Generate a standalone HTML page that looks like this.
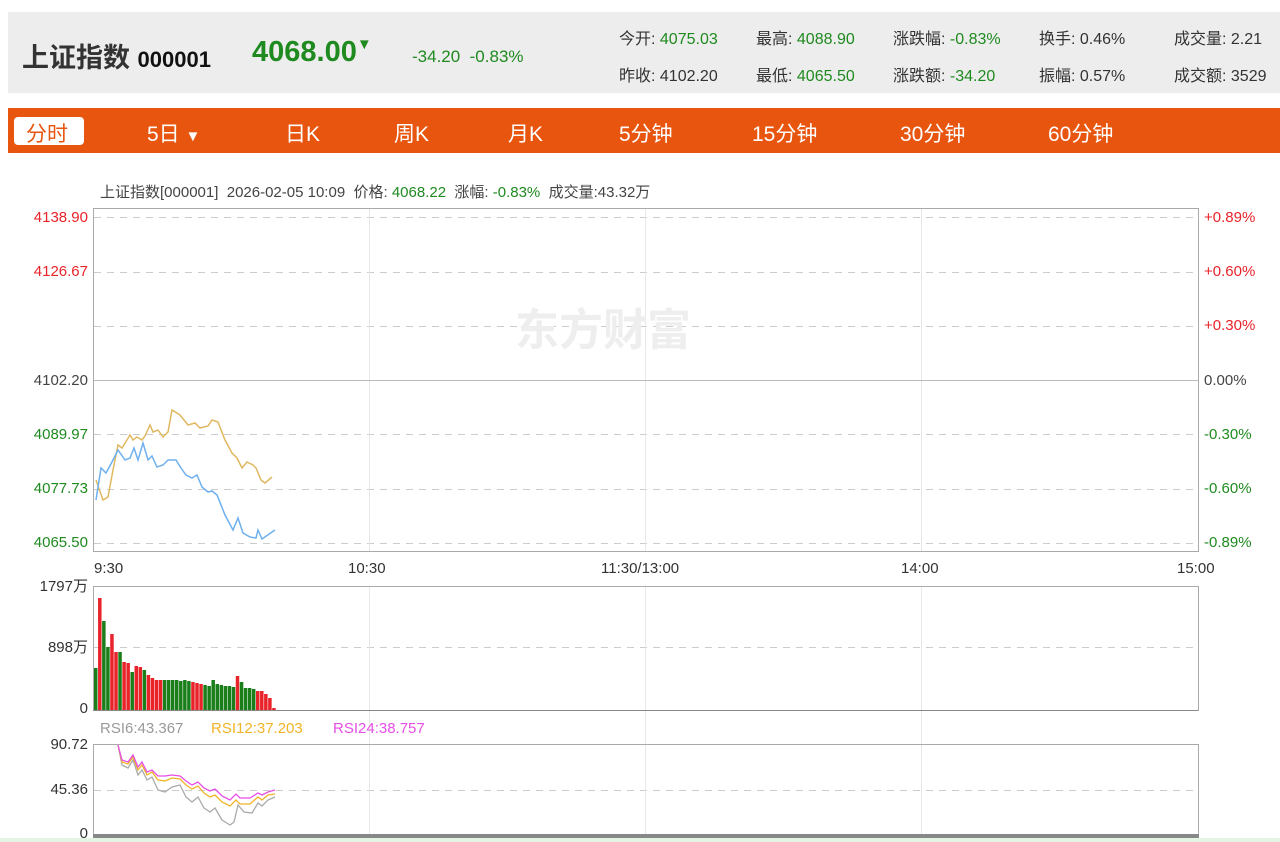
<!DOCTYPE html>
<html><head><meta charset="utf-8"><style>
body{margin:0;width:1280px;height:842px;overflow:hidden;background:#fff;font-family:"Liberation Sans","Noto Sans CJK SC",sans-serif;position:relative}
.hd{position:absolute;left:8px;top:12px;width:1272px;height:81px;background:#ededed}
.a{position:absolute;white-space:nowrap}
.g{color:#1f8a1f}.r{color:#e8232a}
.nav{position:absolute;left:8px;top:108px;width:1272px;height:45px;background:#e8550f}
.nav span{position:absolute;top:10px;color:#fff;font-size:21px}
.q{font-size:16px;color:#333}
</style></head><body>
<div class="hd"></div>
<div class="a" style="left:22px;top:36px;font-size:27px;font-weight:bold;color:#333">上证指数 <span style="font-size:22px;color:#111">000001</span></div>
<div class="a g" style="left:252px;top:36px;font-size:29px;font-weight:bold">4068.00<span style="font-size:15px;vertical-align:top">▼</span></div>
<div class="a g" style="left:412px;top:47px;font-size:17px">-34.20&nbsp;&nbsp;-0.83%</div>
<div class="a q" style="left:619px;top:25px">今开: <span class="g">4075.03</span></div>
<div class="a q" style="left:756px;top:25px">最高: <span class="g">4088.90</span></div>
<div class="a q" style="left:893px;top:25px">涨跌幅: <span class="g">-0.83%</span></div>
<div class="a q" style="left:1039px;top:25px">换手: 0.46%</div>
<div class="a q" style="left:1174px;top:25px">成交量: 2.21</div>
<div class="a q" style="left:619px;top:62px">昨收: 4102.20</div>
<div class="a q" style="left:756px;top:62px">最低: <span class="g">4065.50</span></div>
<div class="a q" style="left:893px;top:62px">涨跌额: <span class="g">-34.20</span></div>
<div class="a q" style="left:1039px;top:62px">振幅: 0.57%</div>
<div class="a q" style="left:1174px;top:62px">成交额: 3529</div>
<div class="nav">
<div style="position:absolute;left:6px;top:9px;width:70px;height:28px;background:#fff;border-radius:4px"></div>
<span style="left:18px;top:10px;color:#e8550f">分时</span>
<span style="left:139px">5日 <span style="font-size:15px;position:static">▼</span></span>
<span style="left:277px">日K</span><span style="left:386px">周K</span><span style="left:500px">月K</span>
<span style="left:611px">5分钟</span><span style="left:744px">15分钟</span><span style="left:892px">30分钟</span><span style="left:1040px">60分钟</span>
</div>
<div class="a" style="left:100px;top:181px;font-size:15px;color:#444">上证指数[000001]&nbsp;&nbsp;2026-02-05 10:09&nbsp;&nbsp;价格: <span class="g">4068.22</span>&nbsp;&nbsp;涨幅: <span class="g">-0.83%</span>&nbsp;&nbsp;成交量:43.32万</div>
<svg class="a" style="left:0;top:0" width="1280" height="842" font-family="Liberation Sans,Noto Sans CJK SC,sans-serif" font-size="15">
<g stroke="#ccc" stroke-dasharray="7,6" stroke-width="1">
<line x1="94" x2="1198" y1="217.5" y2="217.5"/><line x1="94" x2="1198" y1="272.5" y2="272.5"/><line x1="94" x2="1198" y1="326.5" y2="326.5"/>
<line x1="94" x2="1198" y1="434.5" y2="434.5"/><line x1="94" x2="1198" y1="489.5" y2="489.5"/><line x1="94" x2="1198" y1="543.5" y2="543.5"/>
<line x1="94" x2="1198" y1="647.5" y2="647.5"/><line x1="94" x2="1198" y1="790.5" y2="790.5"/>
</g>
<g stroke="#e8e8e8"><line x1="369.5" x2="369.5" y1="208" y2="551"/><line x1="645.5" x2="645.5" y1="208" y2="551"/><line x1="921.5" x2="921.5" y1="208" y2="551"/>
<line x1="369.5" x2="369.5" y1="586" y2="834"/><line x1="645.5" x2="645.5" y1="586" y2="834"/><line x1="921.5" x2="921.5" y1="586" y2="834"/></g>
<line x1="94" x2="1198" y1="380.5" y2="380.5" stroke="#bbb"/>
<rect x="93.5" y="208.5" width="1105" height="343" fill="none" stroke="#aaa"/>
<rect x="93.5" y="586.5" width="1105" height="124" fill="none" stroke="#aaa"/>
<rect x="93.5" y="744.5" width="1105" height="90" fill="none" stroke="#aaa"/>
<line x1="93" x2="1198" y1="710.5" y2="710.5" stroke="#888"/>
<text x="515" y="345" font-size="44" font-weight="bold" fill="#eee">东方财富</text>
<g text-anchor="end"><text x="88" y="222" fill="#e8232a">4138.90</text><text x="88" y="276" fill="#e8232a">4126.67</text>
<text x="88" y="385" fill="#444">4102.20</text><text x="88" y="439" fill="#1f8a1f">4089.97</text><text x="88" y="493" fill="#1f8a1f">4077.73</text><text x="88" y="547" fill="#1f8a1f">4065.50</text>
<text x="88" y="591" fill="#333">1797万</text><text x="88" y="652" fill="#333">898万</text><text x="88" y="713" fill="#333">0</text>
<text x="88" y="749" fill="#333">90.72</text><text x="88" y="794" fill="#333">45.36</text><text x="88" y="838" fill="#333">0</text></g>
<g fill="#e8232a"><text x="1204" y="222">+0.89%</text><text x="1204" y="276">+0.60%</text><text x="1204" y="330">+0.30%</text></g>
<text x="1204" y="385" fill="#444">0.00%</text>
<g fill="#1f8a1f"><text x="1204" y="439">-0.30%</text><text x="1204" y="493">-0.60%</text><text x="1204" y="547">-0.89%</text></g>
<g fill="#333"><text x="94" y="573">9:30</text><text x="348" y="573">10:30</text><text x="601" y="573">11:30/13:00</text><text x="901" y="573">14:00</text><text x="1177" y="573">15:00</text></g>
<text x="100" y="733" fill="#999">RSI6:43.367</text><text x="211" y="733" fill="#f0b429">RSI12:37.203</text><text x="333" y="733" fill="#e64ee6">RSI24:38.757</text>
<polyline fill="none" stroke="#e0b860" stroke-width="1.5" points="96,480 103,500 108,497 113,470 118,445 122,448 130,435 133,440 137,437 142,440 145,436 150,425 153,432 158,430 163,437 168,432 172,410 180,415 188,425 195,423 200,428 208,426 212,420 218,422 225,440 232,453 237,458 242,468 247,462 253,465 256,468 261,480 265,483 272,477"/>
<polyline fill="none" stroke="#6fb0ee" stroke-width="1.5" points="96,500 101,468 106,473 112,462 118,450 125,460 130,458 134,448 138,460 143,443 148,460 152,456 157,467 163,465 168,460 176,460 181,468 186,475 192,478 197,475 202,487 208,492 212,491 217,495 225,515 233,530 238,518 243,533 250,537 256,538 258,530 262,539 275,530"/>
<polyline fill="none" stroke="#aaa" stroke-width="1.3" points="118,745 122,765 128,768 133,760 138,775 142,770 147,780 152,777 158,790 165,792 172,787 180,785 186,797 192,802 198,797 204,808 210,812 215,808 222,820 230,825 234,822 238,805 244,812 252,813 258,803 262,806 268,800 275,797"/>
<polyline fill="none" stroke="#f0b429" stroke-width="1.3" points="118,745 122,762 128,764 133,757 138,770 142,765 147,775 152,772 158,780 165,781 172,778 180,779 186,785 192,789 198,786 204,793 210,797 215,795 222,802 230,806 236,800 240,804 250,804 258,797 262,800 268,795 275,794"/>
<polyline fill="none" stroke="#e64ee6" stroke-width="1.3" points="118,745 122,760 128,762 133,755 138,767 142,762 147,772 152,770 158,776 165,776 172,775 180,776 186,781 192,785 198,782 204,788 210,791 215,789 222,796 230,800 236,794 240,798 250,798 258,793 262,795 268,792 275,790"/>
<g id="vb"></g>
<rect x="93" y="834" width="1106" height="4" fill="#888"/>
<rect x="0" y="838" width="1280" height="4" fill="#e6f4e6"/>
</svg>
<script>
var h=[42,112,89,63,76,58,58,48,47,38,44,43,40,35,32,30,30,30,30,30,30,29,30,29,28,27,26,25,24,30,26,25,24,24,23,34,28,22,22,21,19,19,16,12,2];
var red=[1,4,5,7,8,10,11,13,14,15,16,24,25,26,35,40,41,42,43,44];
var s='';for(var i=0;i<h.length;i++){var y=710-h[i];var col=red.indexOf(i)>=0?'#e8232a':'#1a7f1a';s+='<rect x="'+(94+i*4.05)+'" y="'+y+'" width="3.5" height="'+h[i]+'" fill="'+col+'"/>';}
document.getElementById('vb').innerHTML=s;
</script>
</body></html>
